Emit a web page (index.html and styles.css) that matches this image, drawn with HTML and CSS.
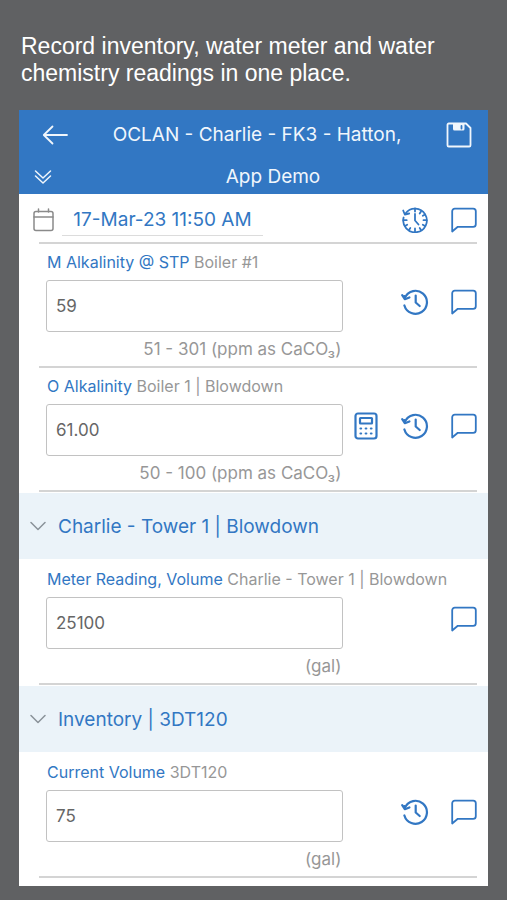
FILE: index.html
```html
<!DOCTYPE html>
<html lang="en">
<head>
<meta charset="UTF-8" />
<meta name="viewport" content="width=device-width, initial-scale=1" />
<title>App Demo - Readings</title>
<link rel="stylesheet" href="styles.css">
</head>
<body>
  <!-- Shared icons -->
  <svg class="sprite" aria-hidden="true">
    <symbol id="icon-comment" viewBox="0 0 26 26">
      <path d="M1.200 24.500V4.200a2.600 2.600 0 0 1 2.600-2.600h18.400a2.600 2.600 0 0 1 2.600 2.600v13a2.600 2.600 0 0 1-2.600 2.600H6.800z" />
    </symbol>
    <symbol id="icon-history" viewBox="0 0 28 26">
      <path d="M4 8.500A11.500 11.500 0 1 1 3.400 16.500" />
      <path d="M1.200 6.200l2.600 4 4.600-1.800M3.800 10.200l-.4-3" />
      <path d="M14.700 6.500v7l4 3.500" />
    </symbol>
    <symbol id="icon-clock" viewBox="0 0 28 26">
      <path d="M4.500 6.500A11.800 11.800 0 1 1 2.600 10.500" />
      <path d="M2.200 3.500l1.600 4 4.400-1" />
      <path d="M14 7v6.500l3.500 4" />
      <path d="M14 1.500v3M14 21.500v3M2.500 13.200h3.200M22.500 13.200h3M20 4.500l-1.300 2M24 7.500l-2.200 1.300M24 19l-2.200-1.300M20 23l-1.300-2M8 23l1.300-2M4 19l2.200-1.300" />
    </symbol>
    <symbol id="icon-calc" viewBox="0 0 24 28">
      <rect x="1.500" y="1.500" width="21" height="25" rx="2.500" />
      <rect x="6" y="6" width="12" height="5.500" rx="0.500" />
      <path d="M6.500 16.500h.6M11.700 16.500h.6M16.900 16.500h.6M6.500 21.500h.6M11.700 21.500h.6M16.900 21.500h.6" />
    </symbol>
    <symbol id="icon-chevron" viewBox="0 0 16 10">
      <path d="M1 1.500l7 7 7-7" />
    </symbol>
  </svg>

  <p class="caption">Record inventory, water meter and water chemistry readings in one place.</p>

  <main class="screen">
    <header class="header">
      <div class="header-row">
        <button type="button" class="icon-btn" aria-label="Back">
          <svg class="icon" width="26" height="20" viewBox="0 0 26 20"><path d="M10.500 1.500L1.800 10l8.700 8.500M2 10h23" /></svg>
        </button>
        <h1 class="title">OCLAN - Charlie - FK3 - Hatton,</h1>
        <button type="button" class="icon-btn" aria-label="Save">
          <svg class="icon" width="26" height="26" viewBox="0 0 26 26">
            <path d="M2.800 1.500h17.200l4.500 4.500v17.200a1.300 1.300 0 0 1-1.300 1.300H2.800a1.300 1.300 0 0 1-1.300-1.300V2.800a1.300 1.300 0 0 1 1.300-1.300z" />
            <path class="solid" d="M7 1.500h11.500v5.500a1.500 1.500 0 0 1-1.500 1.500H8.500A1.500 1.500 0 0 1 7 7z" />
            <path class="notch" d="M15.500 4v2.500" />
          </svg>
        </button>
      </div>
      <div class="header-row header-sub">
        <button type="button" class="icon-btn small" aria-label="Expand all">
          <svg class="icon thin" width="18" height="16" viewBox="0 0 18 16"><path d="M1.500 2l7.500 7 7.500-7M1.500 7l7.500 7 7.500-7" /></svg>
        </button>
        <h2 class="title">App Demo</h2>
      </div>
    </header>

    <div class="date-row">
      <svg class="calendar" width="22" height="24" viewBox="0 0 22 24" aria-hidden="true"><rect x="1" y="3.500" width="19" height="19" rx="2" /><path d="M1 9h19M5.500 1v3M15.500 1v3" /></svg>
      <input type="text" class="date-input" aria-label="Reading date" value="17-Mar-23 11:50 AM">
      <div class="actions">
        <button type="button" class="icon-btn" aria-label="Time"><svg class="icon" width="28" height="26"><use href="#icon-clock" /></svg></button>
        <button type="button" class="icon-btn" aria-label="Comment"><svg class="icon" width="26" height="26"><use href="#icon-comment" /></svg></button>
      </div>
    </div>

    <div class="reading">
      <label for="mAlk"><span class="name">M Alkalinity @ STP</span> Boiler #1</label>
      <div class="field">
        <input type="text" id="mAlk" inputmode="decimal" value="59">
        <div class="actions">
          <button type="button" class="icon-btn" aria-label="History"><svg class="icon bold" width="28" height="26"><use href="#icon-history" /></svg></button>
          <button type="button" class="icon-btn" aria-label="Comment"><svg class="icon" width="26" height="26"><use href="#icon-comment" /></svg></button>
        </div>
      </div>
      <div class="unit">51 - 301 (ppm as CaCO₃)</div>
    </div>

    <div class="reading">
      <label for="oAlk"><span class="name">O Alkalinity</span> Boiler 1 | Blowdown</label>
      <div class="field">
        <input type="text" id="oAlk" inputmode="decimal" value="61.00">
        <div class="actions">
          <button type="button" class="icon-btn" aria-label="Calculator"><svg class="icon bold" width="24" height="28"><use href="#icon-calc" /></svg></button>
          <button type="button" class="icon-btn" aria-label="History"><svg class="icon bold" width="28" height="26"><use href="#icon-history" /></svg></button>
          <button type="button" class="icon-btn" aria-label="Comment"><svg class="icon" width="26" height="26"><use href="#icon-comment" /></svg></button>
        </div>
      </div>
      <div class="unit">50 - 100 (ppm as CaCO₃)</div>
    </div>

    <button type="button" class="section" aria-expanded="true">
      <svg class="chevron" width="16" height="10"><use href="#icon-chevron" /></svg>
      Charlie - Tower 1 | Blowdown
    </button>

    <div class="reading">
      <label for="meter"><span class="name">Meter Reading, Volume</span> Charlie - Tower 1 | Blowdown</label>
      <div class="field">
        <input type="text" id="meter" inputmode="decimal" value="25100">
        <div class="actions">
          <button type="button" class="icon-btn" aria-label="Comment"><svg class="icon" width="26" height="26"><use href="#icon-comment" /></svg></button>
        </div>
      </div>
      <div class="unit">(gal)</div>
    </div>

    <button type="button" class="section" aria-expanded="true">
      <svg class="chevron" width="16" height="10"><use href="#icon-chevron" /></svg>
      Inventory | 3DT120
    </button>

    <div class="reading">
      <label for="volume"><span class="name">Current Volume</span> 3DT120</label>
      <div class="field">
        <input type="text" id="volume" inputmode="decimal" value="75">
        <div class="actions">
          <button type="button" class="icon-btn" aria-label="History"><svg class="icon bold" width="28" height="26"><use href="#icon-history" /></svg></button>
          <button type="button" class="icon-btn" aria-label="Comment"><svg class="icon" width="26" height="26"><use href="#icon-comment" /></svg></button>
        </div>
      </div>
      <div class="unit">(gal)</div>
    </div>
  </main>
</body>
</html>
```

FILE: styles.css
```css
*, *:before, *:after {
  box-sizing: border-box;
}

body {
  margin: 0;
  padding: 33px 19px 14px;
  background: #606163;
  color: #979797;
  font-family: Inter, "Liberation Sans", sans-serif;
  font-size: 16px;
  line-height: 20px;
}

button,
input {
  font-family: inherit;
}

.sprite {
  display: none;
}

.caption {
  margin: 0 0 23px;
  padding: 0 2px;
  color: #fff;
  font-family: "Liberation Sans", Arial, sans-serif;
  font-size: 23px;
  line-height: 27px;
}

.screen {
  background: #fff;
  padding-bottom: 8px;
}

/* Header */
.header {
  background: #3277c3;
  color: #f0f6fc;
}

.header-row {
  display: flex;
  align-items: center;
  height: 49px;
  padding: 0 16px 0 23px;
}

.header-sub {
  height: 35px;
  padding: 0 0 0 15px;
}

.header-sub .title {
  padding-left: 6px;
}

.title {
  flex: 1;
  margin: 0;
  font-size: 19px;
  font-weight: 400;
  line-height: 24px;
  text-align: center;
}

/* Icons */
.icon-btn {
  display: flex;
  align-items: center;
  justify-content: center;
  width: 26px;
  height: 28px;
  padding: 0;
  border: none;
  background: none;
  color: inherit;
  cursor: pointer;
}

.icon-btn.small {
  width: 18px;
}

.icon,
.chevron,
.calendar {
  flex: none;
  fill: none;
  stroke: currentColor;
  stroke-width: 1.8;
  stroke-linecap: round;
  stroke-linejoin: round;
}

.icon.thin,
.chevron,
.calendar {
  stroke-width: 1.5;
}

.icon.bold {
  stroke-width: 2.2;
}

.icon .solid {
  fill: currentColor;
  stroke: none;
}

.icon .notch {
  stroke: #3277c3;
}

.actions {
  display: flex;
  justify-content: flex-end;
  gap: 23px;
  margin-left: auto;
  color: #3277c3;
}

/* Date */
.date-row {
  display: flex;
  align-items: center;
  height: 50px;
  margin: 0 11px 0 20px;
  padding-top: 3px;
  border-bottom: 2px solid #d4d4d4;
}

.calendar {
  margin-left: -6px;
  color: #8a8a8a;
}

.date-input {
  width: 201px;
  height: 32px;
  margin-left: 7px;
  padding: 0;
  border: none;
  border-bottom: 1px solid #dcdcdc;
  background: none;
  color: #3277c3;
  font-size: 19px;
  text-align: center;
}

/* Readings */
.reading {
  margin: 0 11px 0 20px;
  padding: 8px 0 7px 7px;
  border-bottom: 2px solid #d4d4d4;
}

.reading label {
  display: block;
  padding-left: 1px;
}

.name {
  color: #3277c3;
}

.field {
  display: flex;
  align-items: center;
  margin: 8px 0 7px;
}

.field input {
  width: 69%;
  height: 52px;
  padding: 0 9px;
  border: 1px solid #c2c2c2;
  border-radius: 3px;
  background: #fff;
  color: #666;
  font-size: 17px;
}

.field .actions {
  margin-bottom: 9px;
}

.unit {
  width: 69%;
  padding-right: 2px;
  font-size: 17px;
  text-align: right;
}

/* Section bars */
.section {
  display: flex;
  align-items: center;
  gap: 12px;
  width: 100%;
  height: 66px;
  margin: 1px 0 2px;
  padding: 0 11px;
  border: none;
  background: #ebf3f9;
  color: #3277c3;
  font-size: 19px;
  text-align: left;
  cursor: pointer;
}

.chevron {
  color: #8a9299;
}
```
